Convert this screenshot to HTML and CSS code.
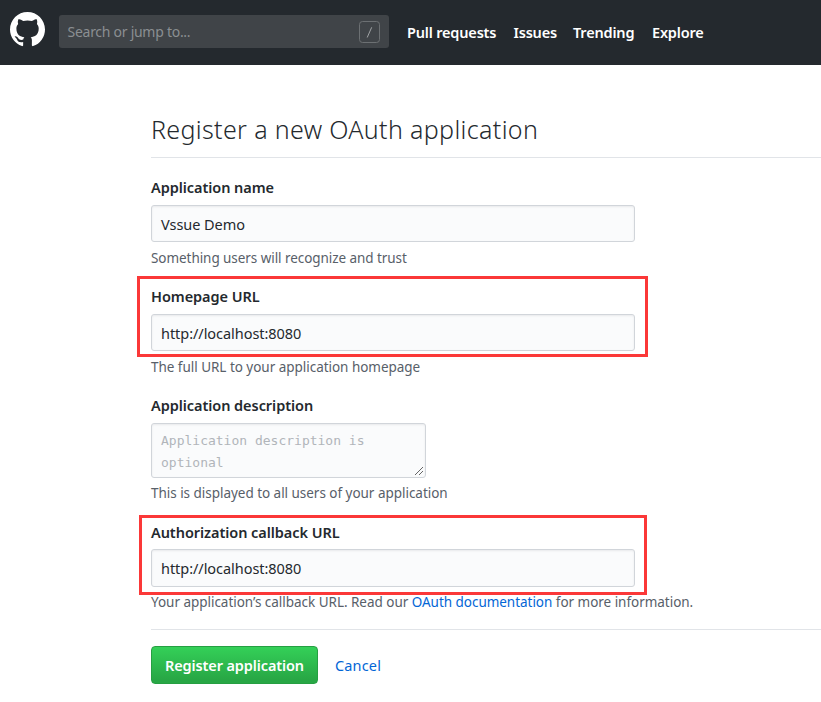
FILE: index.html
```html
<!DOCTYPE html>
<html lang="en">
<head>
<meta charset="utf-8">
<title>Register a new OAuth application</title>
<link rel="stylesheet" href="styles.css">
</head>
<body>
<header class="header">
  <a class="logo" href="#" aria-label="Homepage">
    <svg width="35" height="35" viewBox="0 0 16 16" fill="#fff"><path fill-rule="evenodd" d="M8 0C3.58 0 0 3.58 0 8c0 3.54 2.29 6.53 5.47 7.59.4.07.55-.17.55-.38 0-.19-.01-.82-.01-1.49-2.01.37-2.53-.49-2.69-.94-.09-.23-.48-.94-.82-1.13-.28-.15-.68-.52-.01-.53.63-.01 1.08.58 1.23.82.72 1.21 1.87.87 2.33.66.07-.52.28-.87.51-1.07-1.78-.2-3.64-.89-3.64-3.95 0-.87.31-1.59.82-2.15-.08-.2-.36-1.02.08-2.12 0 0 .67-.21 2.2.82.64-.18 1.32-.27 2-.27.68 0 1.36.09 2 .27 1.53-1.04 2.2-.82 2.2-.82.44 1.1.16 1.92.08 2.12.51.56.82 1.27.82 2.15 0 3.07-1.87 3.75-3.65 3.95.29.25.54.73.54 1.48 0 1.07-.01 1.93-.01 2.2 0 .21.15.46.55.38A8.013 8.013 0 0 0 16 8c0-4.42-3.58-8-8-8z"/></svg>
  </a>
  <div class="search">
    <span class="search-text">Search or jump to...</span>
    <svg class="slash" width="21" height="22" viewBox="0 0 21 22" fill="none"><rect x=".5" y=".5" width="20" height="21" rx="3" stroke="#6c7073"/><path d="M12.7 6.3L8.2 16.5" stroke="#a0a3a5"/></svg>
  </div>
  <nav class="nav">
    <a class="nav-pull" href="#">Pull requests</a>
    <a class="nav-issues" href="#">Issues</a>
    <a class="nav-trending" href="#">Trending</a>
    <a href="#">Explore</a>
  </nav>
</header>
<main class="main">
  <h1 class="title">Register a new OAuth application</h1>
  <form class="form">
    <div class="group">
      <label class="label">Application name</label>
      <div class="input">Vssue Demo</div>
      <p class="note note-name">Something users will recognize and trust</p>
    </div>
    <div class="group">
      <div class="mark mark-home"></div>
      <label class="label">Homepage URL</label>
      <div class="input url">http://localhost:8080</div>
      <p class="note">The full URL to your application homepage</p>
    </div>
    <div class="group group-desc">
      <label class="label">Application description</label>
      <div class="area">Application description is optional
        <svg class="grip" width="10" height="10" viewBox="0 0 10 10" stroke="#666" fill="none"><path d="M1 9L9 1M5 9L9 5"/></svg>
      </div>
      <p class="note">This is displayed to all users of your application</p>
    </div>
    <div class="group group-callback">
      <div class="mark mark-callback"></div>
      <label class="label">Authorization callback URL</label>
      <div class="input url">http://localhost:8080</div>
      <p class="note">Your application’s callback URL. Read our <a href="#">OAuth documentation</a> for more information.</p>
    </div>
    <div class="actions">
      <button class="submit" type="button">Register application</button>
      <a class="cancel" href="#">Cancel</a>
    </div>
  </form>
</main>
</body>
</html>
```
FILE: styles.css
```css
* { box-sizing: border-box; }
body { margin: 0; height: 702px; overflow: hidden; background: #fff; color: #24292e; font: 14.5px/22px "Noto Sans", "Open Sans", sans-serif; }
a { color: #0366d6; text-decoration: none; }
.header { height: 65px; background: #24292e; display: flex; align-items: center; padding: 0 10px 3px; }
.logo { display: flex; width: 35px; height: 35px; margin: -3px 14px 0 0; }
.search { width: 330px; height: 33px; border-radius: 3px; background: #404448; display: flex; align-items: center; justify-content: space-between; padding: 1px 9px 0 8px; color: #8b8f92; font-size: 14px; white-space: nowrap; }
.search-text { padding-top: 1px; letter-spacing: -.27px; margin-left: .5px; }
.nav { display: flex; margin: 1px 0 0 18px; white-space: nowrap; }
.nav a { color: #fff; font-weight: 600; font-size: 14.5px; letter-spacing: -.18px; }
.nav .nav-pull { width: 106.5px; }
.nav .nav-issues { width: 59.5px; }
.nav .nav-trending { width: 79px; }
.main { margin-left: 151px; padding-top: 46px; }
.title { margin: 0 0 18px; height: 47px; border-bottom: 1px solid #e1e4e8; font-size: 25px; line-height: 37px; font-weight: 300; letter-spacing: .35px; white-space: nowrap; }
.form { margin: 0; }
.group { position: relative; margin-bottom: 17px; }
.label { display: block; width: max-content; font-weight: 600; margin-bottom: 7px; letter-spacing: -.06px; }
.input { width: 484px; height: 37px; border: 1px solid #d1d5da; border-radius: 3px; background: #fafbfc; box-shadow: inset 0 1px 2px rgba(27,31,35,.075); padding: 7px 9px; line-height: 22px; letter-spacing: -.05px; }
.note { margin: 6px 0 0; height: 20px; line-height: 20px; font-size: 13.5px; letter-spacing: -.03px; color: #586069; white-space: nowrap; }
.note-name { letter-spacing: -.06px; }
.area { position: relative; width: 275px; height: 55px; border: 1px solid #d1d5da; border-radius: 3px; background: #fafbfc; box-shadow: inset 0 1px 2px rgba(27,31,35,.075); padding: 6px 9px; color: #b1b5ba; font: 13px/22px "DejaVu Sans Mono", monospace; }
.grip { position: absolute; right: 1px; bottom: 1px; }
.group-desc { margin-bottom: 18px; }
.group-desc .note { margin-top: 5px; }
.group-callback .label { margin-bottom: 6px; }
.group-callback .input { height: 38px; }
.group-callback .note { margin-top: 5px; }
.mark { position: absolute; border: 3px solid #fb3838; pointer-events: none; }
.mark-home { left: -14px; top: -9px; width: 511px; height: 81px; }
.mark-callback { left: -12px; top: -6px; width: 508px; height: 80px; }
.actions { border-top: 1px solid #e1e4e8; padding-top: 16px; display: flex; align-items: center; }
.submit { width: 167px; height: 38px; padding: 0; border: 1px solid #269f42; border-radius: 4px; background: linear-gradient(#34d058, #28a745 90%); color: #fff; font: 600 14.5px/22px "Noto Sans", "Open Sans", sans-serif; letter-spacing: -.12px; white-space: nowrap; }
.cancel { margin-left: 17px; letter-spacing: .15px; }
```
